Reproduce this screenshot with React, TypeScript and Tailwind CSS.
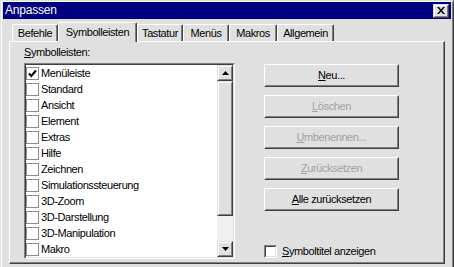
import React from "react";

const toolbars = [
  "Menüleiste",
  "Standard",
  "Ansicht",
  "Element",
  "Extras",
  "Hilfe",
  "Zeichnen",
  "Simulationssteuerung",
  "3D-Zoom",
  "3D-Darstellung",
  "3D-Manipulation",
  "Makro",
];

const tabs = [
  { label: "Befehle", w: "w-[46px]" },
  { label: "Symbolleisten", w: "w-[79px]", active: true },
  { label: "Tastatur", w: "w-[46px]" },
  { label: "Menüs", w: "w-[46px]" },
  { label: "Makros", w: "w-[48px]" },
  { label: "Allgemein", w: "w-[57px]" },
];

const Raised: React.FC<{ className?: string; children?: React.ReactNode }> = ({ className = "", children }) => (
  <div className={`border border-t-[#e0e0e0] border-l-[#e0e0e0] border-r-[#404040] border-b-[#404040] ${className}`}>
    <div className="w-full h-full border border-t-white border-l-white border-r-[#808080] border-b-[#808080] bg-[#e0e0e0] flex items-center justify-center">
      {children}
    </div>
  </div>
);

const Arrow: React.FC<{ up?: boolean }> = ({ up }) => (
  <svg width="7" height="4" viewBox="0 0 7 4">
    <path d={up ? "M3.5 0L7 4H0z" : "M0 0h7L3.5 4z"} fill="#000" />
  </svg>
);

interface ButtonProps {
  mnemonic: string;
  rest: string;
  disabled?: boolean;
}

const DlgButton: React.FC<ButtonProps> = ({ mnemonic, rest, disabled }) => (
  <div className="h-[23px] w-[135px] border border-t-white border-l-white border-r-[#404040] border-b-[#404040]">
    <div
      className={`w-full h-full border border-t-[#e0e0e0] border-l-[#e0e0e0] border-r-[#808080] border-b-[#808080] flex items-center justify-center ${
        disabled ? "text-[#a0a0a0]" : "text-black"
      }`}
    >
      <span>
        <span className="underline underline-offset-[1px]">{mnemonic}</span>
        {rest}
      </span>
    </div>
  </div>
);

const ListCheck: React.FC<{ checked?: boolean }> = ({ checked }) => (
  <div className="w-[13px] h-[13px] border border-[#8c8c8c] bg-white flex items-center justify-center shrink-0">
    {checked && (
      <svg width="9" height="9" viewBox="0 0 9 9">
        <path d="M1 4.5l2.3 2.5L8 1.5" stroke="#000" strokeWidth="2" fill="none" />
      </svg>
    )}
  </div>
);

export default function App() {
  return (
    <div className="w-[454px] h-[267px] overflow-hidden bg-[#e0e0e0] font-['Liberation_Sans',Arial,sans-serif] text-[11px] leading-[13px] tracking-[-0.4px] text-black">
      <div className="w-full h-[270px] border border-t-[#e0e0e0] border-l-[#e0e0e0] border-r-[#404040] border-b-[#404040]">
        <div className="w-full h-full border border-t-white border-l-white border-r-[#808080] border-b-[#808080] px-px flex flex-col">
          {/* title bar */}
          <div className="h-[17px] bg-[#000080] flex items-center justify-between pl-[2px] pr-[2px] shrink-0">
            <span className="text-white text-[12px] tracking-[-0.2px]">Anpassen</span>
            <Raised className="w-[16px] h-[14px]">
              <svg width="8" height="7" viewBox="0 0 8 7">
                <path d="M0 0h2l2 2.4L6 0h2L5 3.5 8 7H6L4 4.6 2 7H0l3-3.5z" fill="#000" />
              </svg>
            </Raised>
          </div>

          <div className="mx-[6px] mt-[3px] flex flex-col">
            {/* tabs */}
            <div className="h-[19px] flex items-end pl-[3px]">
              {tabs.map((t) =>
                t.active ? (
                  <div
                    key={t.label}
                    className={`${t.w} h-[20px] -mb-px relative z-10 bg-[#e0e0e0] border-l border-t border-r border-l-white border-t-white border-r-[#404040] rounded-t-[2px] shadow-[inset_-1px_0_#808080] flex items-start justify-center pt-[3px]`}
                  >
                    {t.label}
                  </div>
                ) : (
                  <div
                    key={t.label}
                    className={`${t.w} h-[17px] bg-[#e0e0e0] border-l border-t border-r border-l-white border-t-white border-r-[#404040] rounded-t-[2px] shadow-[inset_-1px_0_#808080] flex items-start justify-center pt-[2px]`}
                  >
                    {t.label}
                  </div>
                )
              )}
            </div>

            {/* panel */}
            <div className="h-[223px] border border-t-white border-l-white border-r-[#404040] border-b-[#404040] shadow-[inset_-1px_-1px_#808080] pl-[14px] pt-[4px]">
              <div>
                <span className="underline underline-offset-[1px]">S</span>ymbolleisten:
              </div>
              <div className="mt-[4px] flex">
                {/* list box */}
                <div className="w-[211px] h-[196px] border border-t-[#808080] border-l-[#808080] border-r-white border-b-white">
                  <div className="w-full h-full border border-t-[#404040] border-l-[#404040] border-r-[#e0e0e0] border-b-[#e0e0e0] bg-white flex">
                    <div className="flex-1 flex flex-col">
                      {toolbars.map((name, i) => (
                        <div key={name} className="h-[16px] flex items-center">
                          <ListCheck checked={i === 0} />
                          <span className="ml-[2px]">{name}</span>
                        </div>
                      ))}
                    </div>
                    {/* scrollbar */}
                    <div className="w-[16px] flex flex-col">
                      <Raised className="w-[16px] h-[16px]">
                        <Arrow up />
                      </Raised>
                      <Raised className="w-[16px] h-[135px]" />
                      <div className="flex-1 bg-[#f0f0f0]" />
                      <Raised className="w-[16px] h-[16px]">
                        <Arrow />
                      </Raised>
                    </div>
                  </div>
                </div>

                {/* buttons */}
                <div className="ml-[29px] flex flex-col">
                  <div className="mt-px flex flex-col gap-[8px]">
                    <DlgButton mnemonic="N" rest="eu..." />
                    <DlgButton mnemonic="L" rest="öschen" disabled />
                    <DlgButton mnemonic="U" rest="mbenennen..." disabled />
                    <DlgButton mnemonic="Z" rest="urücksetzen" disabled />
                    <DlgButton mnemonic="A" rest="lle zurücksetzen" />
                  </div>
                  <div className="mt-auto mb-px flex items-center">
                    <div className="w-[13px] h-[13px] border border-t-[#808080] border-l-[#808080] border-r-white border-b-white">
                      <div className="w-full h-full border border-t-[#404040] border-l-[#404040] border-r-[#e0e0e0] border-b-[#e0e0e0] bg-white" />
                    </div>
                    <span className="ml-[5px]">
                      <span className="underline underline-offset-[1px]">S</span>ymboltitel anzeigen
                    </span>
                  </div>
                </div>
              </div>
            </div>
          </div>
        </div>
      </div>
    </div>
  );
}
